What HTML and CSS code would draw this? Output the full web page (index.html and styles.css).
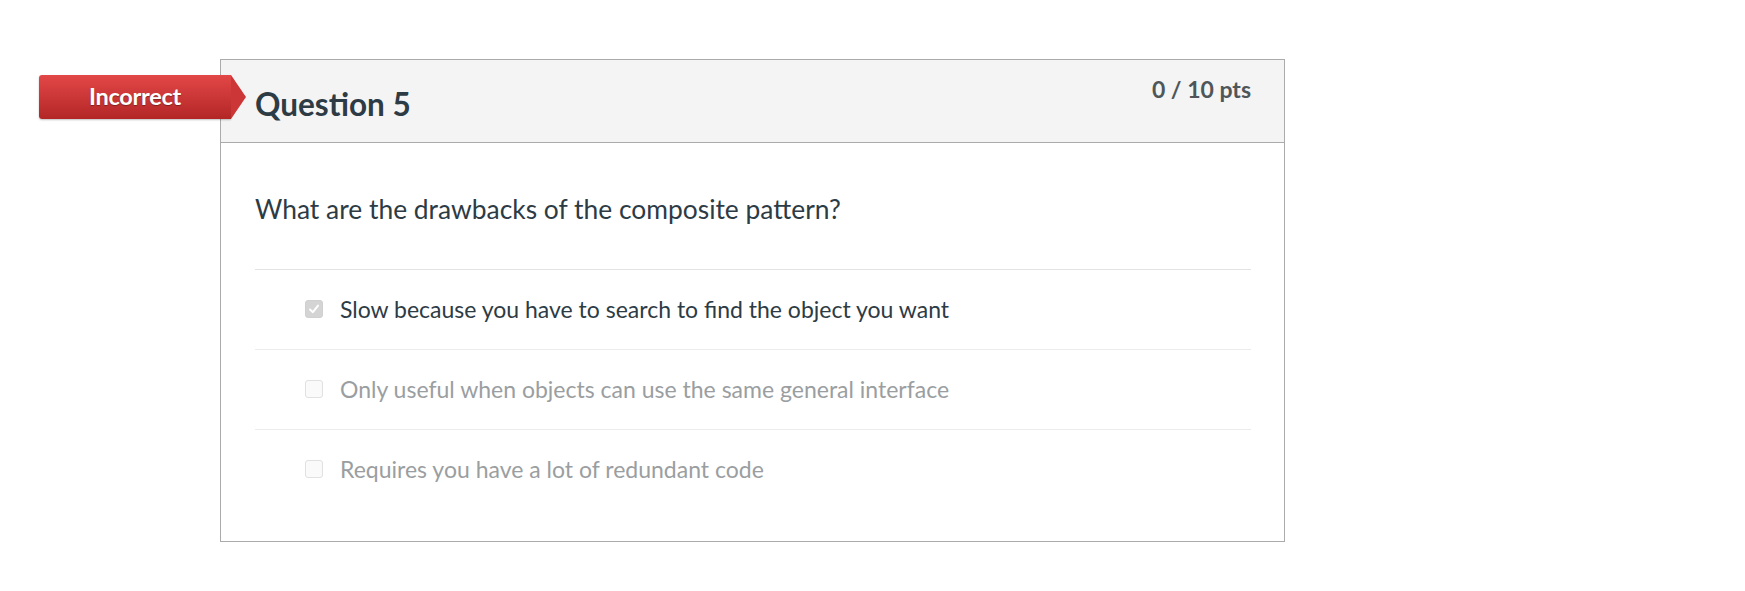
FILE: index.html
```html
<!DOCTYPE html>
<html lang="en">
<head>
<meta charset="utf-8">
<title>Question 5</title>
<link rel="stylesheet" href="styles.css">
</head>
<body>
<div class="page">
  <div class="question">
    <div class="badge">Incorrect</div>
    <div class="q-header">
      <h2 class="q-title">Question 5</h2>
      <div class="q-pts">0 / 10 pts</div>
    </div>
    <div class="q-body">
      <p class="q-text">What are the drawbacks of the composite pattern?</p>
      <div class="answers">
        <div class="answer selected">
          <span class="check checked">
            <svg viewBox="0 0 18 18" width="18" height="18"><path d="M4.5 9.5 L7.8 12.6 L13.5 5.2" fill="none" stroke="#fff" stroke-width="2.2" stroke-linecap="round" stroke-linejoin="round"/></svg>
          </span>
          <span class="answer-text">Slow because you have to search to find the object you want</span>
        </div>
        <div class="answer">
          <span class="check"></span>
          <span class="answer-text">Only useful when objects can use the same general interface</span>
        </div>
        <div class="answer">
          <span class="check"></span>
          <span class="answer-text">Requires you have a lot of redundant code</span>
        </div>
      </div>
    </div>
  </div>
</div>
</body>
</html>
```

FILE: styles.css
```css
html, body {
  margin: 0;
  padding: 0;
  background: #fff;
}
body {
  font-family: Lato, "Open Sans", "Liberation Sans", sans-serif;
  color: #2d3b45;
}
.page {
  padding: 59px 0 0 220px;
}
.question {
  position: relative;
  width: 1063px;
  border: 1px solid #ababab;
}
.badge {
  position: absolute;
  left: -182px;
  top: 15px;
  width: 192px;
  height: 44px;
  line-height: 42px;
  box-sizing: border-box;
  background: linear-gradient(#e34747, #b32626);
  border-radius: 3px 0 0 3px;
  color: #fff;
  font-weight: 700;
  font-size: 23.5px;
  text-align: center;
  text-shadow: 0 1px 1px rgba(0,0,0,0.35);
  box-shadow: 0 1px 2px rgba(0,0,0,0.25);
  letter-spacing: -0.3px;
}
.badge::after {
  content: "";
  position: absolute;
  right: -15px;
  top: 0;
  width: 0;
  height: 0;
  border-top: 22px solid transparent;
  border-bottom: 22px solid transparent;
  border-left: 15px solid #cc3636;
}
.q-header {
  display: flex;
  justify-content: space-between;
  align-items: flex-start;
  height: 82px;
  padding: 0 33px 0 34px;
  background: #f4f4f4;
  border-bottom: 1px solid #ababab;
}
.q-title {
  margin: 25px 0 0;
  font-size: 31.5px;
  line-height: 38px;
  font-weight: 700;
  color: #2d3b45;
}
.q-pts {
  margin-top: 15px;
  font-size: 23px;
  line-height: 28px;
  font-weight: 700;
  color: #4f5659;
}
.q-body {
  padding: 0 33px 32px 34px;
}
.q-text {
  margin: 49px 0 43px;
  font-size: 26.4px;
  line-height: 34px;
}
.answers {
  border-top: 1px solid #e3e3e3;
}
.answer {
  display: flex;
  align-items: center;
  gap: 17px;
  height: 77px;
  padding: 0 0 2px 50px;
  font-size: 23px;
  color: #9a9ea1;
}
.answer + .answer {
  border-top: 1px solid #ececec;
}
.answer.selected {
  color: #2d3b45;
}
.check {
  flex: none;
  width: 16px;
  height: 16px;
  border: 1px solid #e1e1e1;
  border-radius: 3px;
  background: #fafafa;
  display: flex;
  align-items: center;
  justify-content: center;
}
.check.checked {
  background: #d4d4d4;
  border-color: #d0d0d0;
}
.check svg {
  width: 16px;
  height: 16px;
}
```
